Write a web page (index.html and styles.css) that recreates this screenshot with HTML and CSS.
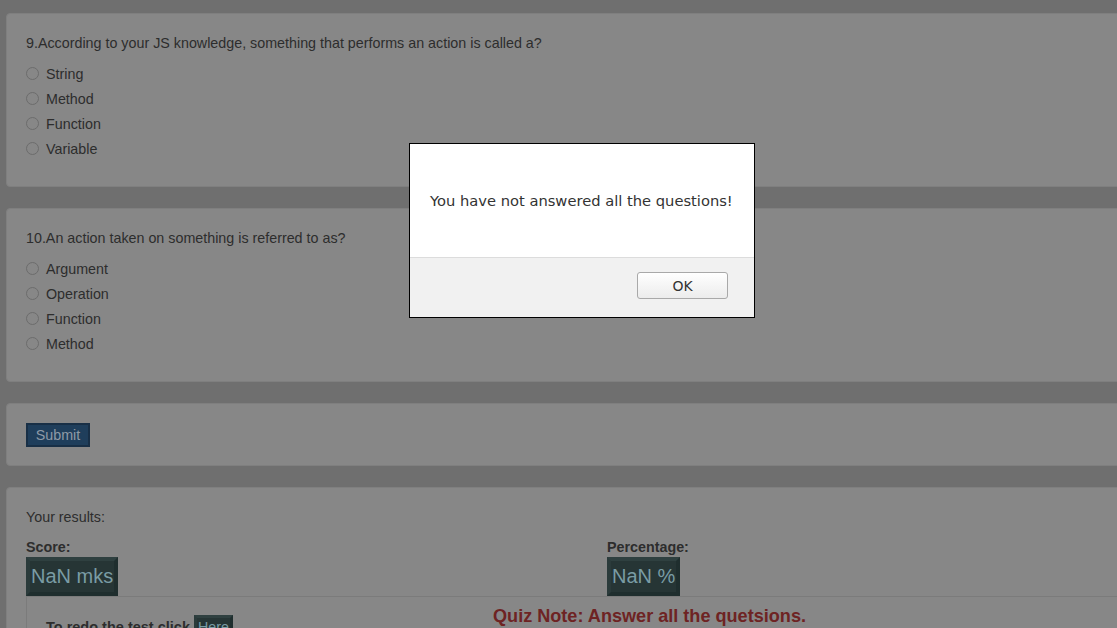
FILE: index.html
```html
<!DOCTYPE html>
<html>
<head>
<meta charset="utf-8">
<title>JS Quiz</title>
<link rel="stylesheet" href="styles.css">
</head>
<body>
<div class="page">
  <section class="panel">
    <p class="question">9.According to your JS knowledge, something that performs an action is called a?</p>
    <ul class="options">
      <li><span class="radio"></span>String</li>
      <li><span class="radio"></span>Method</li>
      <li><span class="radio"></span>Function</li>
      <li><span class="radio"></span>Variable</li>
    </ul>
  </section>

  <section class="panel">
    <p class="question">10.An action taken on something is referred to as?</p>
    <ul class="options">
      <li><span class="radio"></span>Argument</li>
      <li><span class="radio"></span>Operation</li>
      <li><span class="radio"></span>Function</li>
      <li><span class="radio"></span>Method</li>
    </ul>
  </section>

  <section class="panel panel-submit">
    <button class="submit">Submit</button>
  </section>

  <section class="panel panel-results">
    <p class="results-title">Your results:</p>
    <div class="results-row">
      <div class="result-col">
        <p class="result-label">Score:</p>
        <span class="result-box">NaN mks</span>
      </div>
      <div class="result-col">
        <p class="result-label">Percentage:</p>
        <span class="result-box">NaN %</span>
      </div>
    </div>
    <div class="note-box">
      <p class="redo">To redo the test click <span class="here">Here</span></p>
      <p class="quiz-note">Quiz Note: Answer all the quetsions.</p>
    </div>
  </section>
</div>

<div class="dialog">
  <div class="dialog-body">
    <p class="dialog-text">You have not answered all the questions!</p>
  </div>
  <div class="dialog-footer">
    <button class="ok">OK</button>
  </div>
</div>
</body>
</html>
```

FILE: styles.css
```css
html, body {
  margin: 0;
  padding: 0;
  overflow: hidden;
}

body {
  background: #6f6f6f;
  font-family: "Liberation Sans", Arial, sans-serif;
  font-size: 14.3px;
  line-height: 20px;
  color: #2d2d2d;
  width: 1117px;
  height: 628px;
  position: relative;
}

.page {
  width: 1202px;
  padding: 13px 0 0 6px;
  display: flex;
  flex-direction: column;
  gap: 21px;
}

.panel {
  background: #878787;
  border: 1px solid #7f7f7f;
  border-radius: 4px;
  padding: 19px 19px 25px 19px;
}

.question {
  margin: 0 0 8px 0;
}

.options {
  list-style: none;
  margin: 0;
  padding: 0;
}

.options li {
  height: 25px;
  display: flex;
  align-items: center;
  margin-left: -1px;
}

.radio {
  width: 11px;
  height: 11px;
  border: 1px solid #6c6c6c;
  border-radius: 50%;
  margin: 0 7px 0 1px;
  box-sizing: content-box;
  flex-shrink: 0;
}

.panel-submit {
  padding-bottom: 18px;
}

.submit {
  display: block;
  height: 24px;
  width: 64px;
  margin: 0;
  padding: 0;
  background: #1f3e5b;
  border: 2px solid #182f46;
  color: #8e9aa7;
  font-family: "Liberation Sans", Arial, sans-serif;
  font-size: 14.3px;
  line-height: 20px;
}

.panel-results {
  padding-bottom: 0;
  height: 160px;
  overflow: hidden;
}

.results-title {
  margin: 0 0 10px 0;
}

.results-row {
  display: grid;
  grid-template-columns: 581px 581px;
}

.result-label {
  margin: 0;
  font-weight: bold;
}

.result-box {
  display: inline-block;
  background: #263535;
  border: 4px solid;
  border-color: #2f4040 #1f2e2e #1f2e2e #2b3b3b;
  color: #7a9ca4;
  font-size: 20px;
  line-height: 31px;
  padding: 0 1px;
}

.note-box {
  border-top: 1px solid #7b7b7b;
  border-left: 1px solid #7b7b7b;
  display: flex;
  align-items: flex-start;
}

.redo {
  margin: 18px 0 0 19px;
  font-weight: bold;
  font-size: 14.5px;
  white-space: nowrap;
}

.here {
  display: inline-block;
  background: #263535;
  border: 3px solid;
  border-color: #2f4040 #1f2e2e #1f2e2e #2b3b3b;
  color: #7a9ca4;
  font-weight: normal;
  font-size: 14.3px;
  line-height: 18px;
  padding: 0 1px;
}

.quiz-note {
  margin: 9px 0 0 260px;
  font-weight: bold;
  font-size: 18.1px;
  color: #6e2323;
  white-space: nowrap;
}

.dialog {
  position: absolute;
  left: 409px;
  top: 143px;
  width: 344px;
  border: 1px solid #000;
  background: #ffffff;
  font-family: "DejaVu Sans", sans-serif;
}

.dialog-body {
  height: 113px;
  display: flex;
  align-items: center;
  padding: 0 20px;
}

.dialog-text {
  margin: 0;
  font-size: 14.7px;
  color: #333;
  padding-top: 1px;
  white-space: nowrap;
}

.dialog-footer {
  height: 60px;
  background: #f1f1f1;
  border-top: 1px solid #dcdcdc;
  display: flex;
  justify-content: flex-end;
  align-items: flex-start;
  padding: 14px 26px 0 0;
  box-sizing: border-box;
}

.ok {
  width: 91px;
  height: 27px;
  border: 1px solid #a9a9a9;
  border-radius: 3px;
  background: linear-gradient(#ffffff, #ececec);
  color: #333;
  font-family: "DejaVu Sans", sans-serif;
  font-size: 14px;
  padding: 0;
}
```
